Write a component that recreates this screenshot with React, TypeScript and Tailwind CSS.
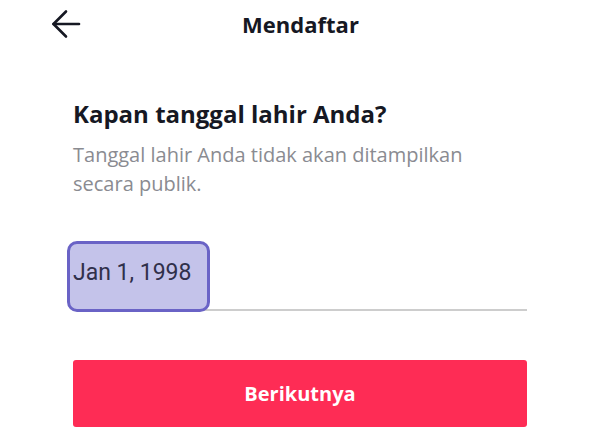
export default function App() {
  return (
    <div className="min-h-screen w-[600px] bg-white font-['Open_Sans','Noto_Sans',sans-serif] text-[#161823]">
      {/* Header */}
      <div className="grid h-[48px] grid-cols-[1fr_auto_1fr] items-center pl-[51px] pr-[50px]">
        <button className="flex h-[30px] w-[30px] items-center justify-start">
          <svg width="30" height="30" viewBox="0 0 30 30" fill="none" stroke="#161823" strokeWidth="2.6" strokeLinecap="round" strokeLinejoin="round">
            <path d="M28 15H2.5" />
            <path d="M15 2.5 2.5 15 15 27.5" />
          </svg>
        </button>
        <h1 className="text-[22px] font-bold leading-[48px]">Mendaftar</h1>
        <div />
      </div>

      <div className="mx-[73px] mt-[50px]">
        <h2 className="text-[24px] font-bold leading-[32px]">Kapan tanggal lahir Anda?</h2>
        <p className="mt-[10px] max-w-[420px] text-[20px] leading-[29px] text-[#8a8b91]">
          Tanggal lahir Anda tidak akan ditampilkan secara publik.
        </p>

        {/* Birthday input */}
        <div className="mt-[43px] flex h-[70px] border-b-2 border-[#cdcdcd]">
          <div className="-mb-[3px] -ml-[6px] h-[71px] w-[143px] rounded-[10px] border-[3.5px] border-[#6a63c6] bg-[#c4c3ea] pl-[3px] pt-[14px] font-['Roboto',sans-serif] text-[23px] leading-[30px] text-[#30304a]">
            Jan 1, 1998
          </div>
        </div>

        <button className="mt-[49px] h-[67px] w-full rounded-[3px] bg-[#fe2c55] text-[20px] font-bold text-white">
          Berikutnya
        </button>
      </div>
    </div>
  );
}
